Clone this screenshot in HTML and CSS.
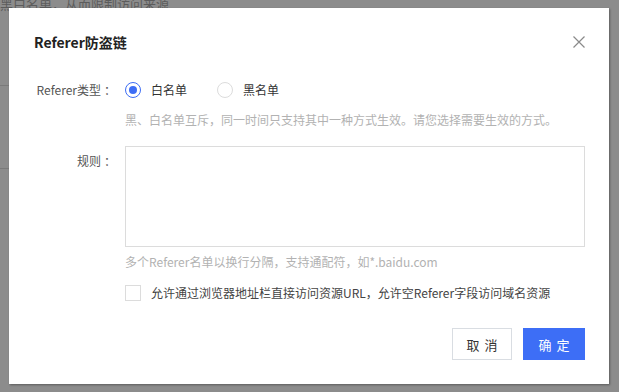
FILE: index.html
```html
<!DOCTYPE html>
<html lang="zh-CN">
<head>
<meta charset="utf-8">
<title>Referer防盗链</title>
<link rel="stylesheet" href="styles.css">
</head>
<body>
<div class="page">
  <div class="page-text">黑白名单，从而限制访问来源</div>
  <div class="page-line first"></div>
  <div class="page-line second"></div>
</div>
<div class="dialog">
  <div class="dialog-header">
    <div class="dialog-title">Referer防盗链</div>
    <svg class="close" width="12" height="12" viewBox="0 0 12 12"><path d="M0.5 0.5 L11.5 11.5 M11.5 0.5 L0.5 11.5" stroke="#8a8a8a" stroke-width="1.2" fill="none"/></svg>
  </div>
  <div class="dialog-body">
    <div class="row">
      <div class="label">Referer类型<span class="colon">：</span></div>
      <div class="field">
        <div class="radios">
          <label class="radio"><span class="radio-dot checked"></span><span class="radio-text">白名单</span></label>
          <label class="radio"><span class="radio-dot"></span><span class="radio-text">黑名单</span></label>
        </div>
        <div class="hint hint-type">黑、白名单互斥，同一时间只支持其中一种方式生效。请您选择需要生效的方式。</div>
      </div>
    </div>
    <div class="row row-rule">
      <div class="label label-rule">规则<span class="colon">：</span></div>
      <div class="field">
        <div class="textarea"></div>
        <div class="hint hint-rule">多个Referer名单以换行分隔，支持通配符，如*.baidu.com</div>
        <label class="check"><span class="check-box"></span><span class="check-text">允许通过浏览器地址栏直接访问资源URL，允许空Referer字段访问域名资源</span></label>
      </div>
    </div>
  </div>
  <div class="dialog-footer">
    <button class="btn btn-cancel">取消</button>
    <button class="btn btn-ok">确定</button>
  </div>
</div>
</body>
</html>
```

FILE: styles.css
```css
html, body {
  margin: 0;
  padding: 0;
  width: 619px;
  height: 392px;
  overflow: hidden;
  background: #8c8c8c;
  font-family: "Noto Sans CJK SC", "Noto Sans", sans-serif;
}

.page {
  position: relative;
  height: 392px;
}

.page-text {
  font-size: 13px;
  line-height: 6px;
  color: #5c5c5c;
  padding-top: 1px;
}

.page-line {
  height: 1px;
  background: #7a7a7a;
  width: 12px;
}

.page-line.first {
  margin-top: 78px;
}

.page-line.second {
  margin-top: 82px;
}

.dialog {
  position: absolute;
  left: 9px;
  top: 8px;
  width: 600px;
  height: 376px;
  background: #fff;
  box-shadow: 1px 1px 2px rgba(0, 0, 0, 0.35);
  display: flex;
  flex-direction: column;
  box-sizing: border-box;
}

.dialog-header {
  display: flex;
  align-items: center;
  justify-content: space-between;
  padding: 24px 24px 0 25px;
  height: 20px;
  box-sizing: content-box;
}

.dialog-title {
  font-size: 14px;
  font-weight: bold;
  color: #222;
  line-height: 20px;
}

.close {
  display: block;
}

.dialog-body {
  padding: 28px 24px 0 0;
  flex: 1;
}

.row {
  display: flex;
}

.label {
  width: 107px;
  padding-right: 9px;
  text-align: right;
  font-size: 12px;
  line-height: 20px;
  color: #555;
  flex-shrink: 0;
}

.colon {
  margin-left: 3px;
}

.label-rule {
  padding-top: 5px;
}

.field {
  flex: 1;
}

.radios {
  display: flex;
  height: 20px;
  align-items: center;
}

.radio {
  display: flex;
  align-items: center;
  margin-right: 30px;
}

.radio-dot {
  width: 14px;
  height: 14px;
  border: 1px solid #dcdcdc;
  border-radius: 50%;
  box-sizing: content-box;
  display: flex;
  align-items: center;
  justify-content: center;
}

.radio-dot.checked {
  border-color: #3d6df5;
}

.radio-dot.checked::after {
  content: "";
  width: 8px;
  height: 8px;
  border-radius: 50%;
  background: #3d6df5;
}

.radio-text {
  margin-left: 10px;
  font-size: 12px;
  line-height: 20px;
  color: #333;
}

.hint {
  font-size: 12px;
  line-height: 20px;
  color: #b2b2b2;
}

.hint-type {
  margin-top: 10px;
}

.row-rule {
  margin-top: 16px;
}

.textarea {
  height: 99px;
  border: 1px solid #dcdcdc;
}

.hint-rule {
  margin-top: 5px;
}

.check {
  display: flex;
  align-items: center;
  margin-top: 11px;
}

.check-box {
  width: 14px;
  height: 14px;
  border: 1px solid #dcdcdc;
  box-sizing: content-box;
}

.check-text {
  margin-left: 10px;
  font-size: 12px;
  line-height: 20px;
  color: #444;
}

.dialog-footer {
  display: flex;
  justify-content: flex-end;
  gap: 11px;
  padding: 0 24px 24px 0;
}

.btn {
  height: 32px;
  font-family: "Noto Sans CJK SC", "Noto Sans", sans-serif;
  font-size: 13px;
  letter-spacing: 5px;
  padding: 0 0 0 5px;
  border-radius: 0;
  cursor: pointer;
}

.btn-cancel {
  width: 60px;
  background: #fff;
  border: 1px solid #d9dde2;
  color: #333;
}

.btn-ok {
  width: 62px;
  background: #3d6ef6;
  border: 1px solid #3d6ef6;
  color: #fff;
}
```
